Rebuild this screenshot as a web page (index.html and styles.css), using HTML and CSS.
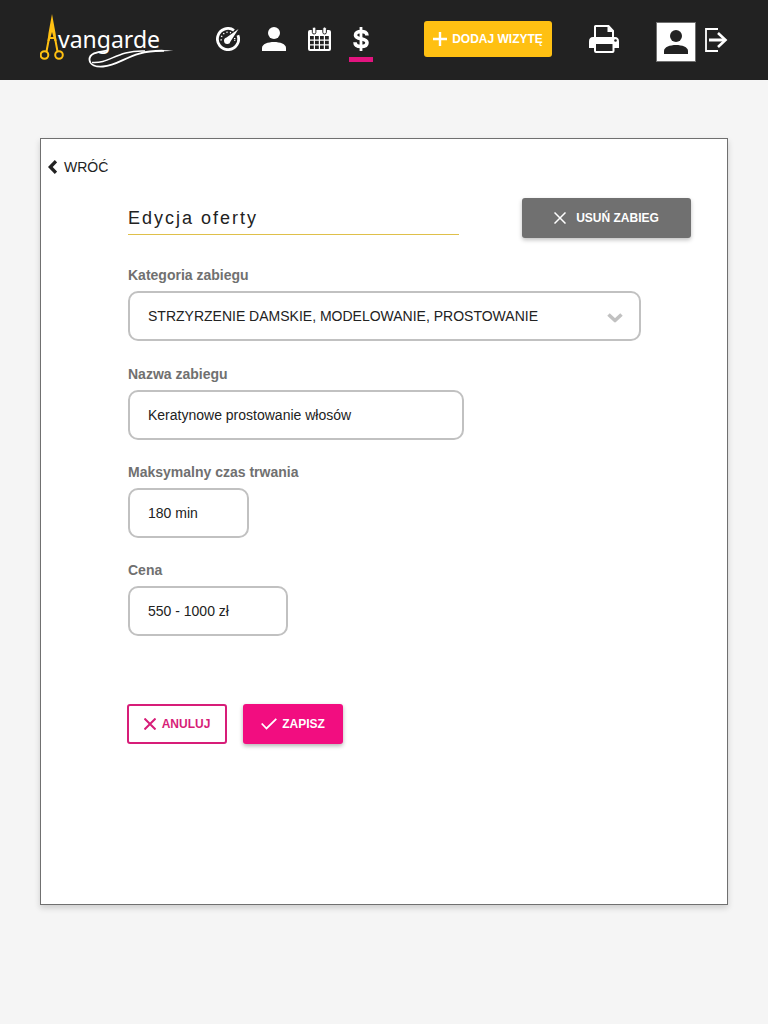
FILE: index.html
```html
<!DOCTYPE html>
<html lang="pl">
<head>
<meta charset="utf-8">
<meta name="viewport" content="width=device-width, initial-scale=1">
<title>Avangarde – Edycja oferty</title>
<link rel="stylesheet" href="styles.css">
</head>
<body>
<header class="topbar">
  <a class="logo" href="#" aria-label="Avangarde">
    <svg width="134" height="56" viewBox="0 0 134 56">
      <g fill="none" stroke="#ffc012" stroke-width="2">
        <circle cx="4.500" cy="43" r="3.800"/>
        <circle cx="19" cy="43" r="3.800"/>
        <path d="M6.500 39.500L9 26M17.500 39.500L15 26M8 26h8"/>
      </g>
      <path d="M12 2L15.500 21L16.500 29h-2L12 20L9.500 29H7.500L8.500 21Z" fill="#ffc012"/>
      <text class="logo-text" x="18" y="36">vangarde</text>
      <path d="M67 38.500C58 40 49 41 49.500 48C50 53 56 55 63 54.500C82 53 90 38 124 38.800" fill="none" stroke="#fff" stroke-width="1.800"/>
      <path d="M115 38.200Q125 37.600 133.500 39Q125 38.800 115 39.800Z" fill="#fff"/>
      <path d="M52 50.500C70 52 76 38 105 39" fill="none" stroke="#fff" stroke-width="1.500"/>
    </svg>
  </a>
  <nav class="nav">
    <a class="nav-item" href="#" aria-label="Pulpit">
      <svg width="24" height="24" viewBox="0 0 24 24">
        <path d="M18 3.300A10.600 10.600 0 1 0 21.900 8.200" fill="none" stroke="#fff" stroke-width="2.800"/>
        <path d="M22.500 2L14.500 14.500A3.300 3.300 0 1 1 10.500 10.500Z" fill="#fff"/>
        <path d="M5.300 13.500A6.900 6.900 0 0 1 15 5.800" fill="none" stroke="#fff" stroke-width="1.400" stroke-dasharray="1.300 2.200"/>
        <path d="M18.700 11v3" fill="none" stroke="#fff" stroke-width="1.400" stroke-dasharray="1.300 1"/>
      </svg>
    </a>
    <a class="nav-item" href="#" aria-label="Klienci">
      <svg width="24" height="24" viewBox="0 0 24 24" fill="#fff"><circle cx="12" cy="6" r="6"/><path d="M0 24V21C0 17 6 15 12 15S24 17 24 21V24Z"/></svg>
    </a>
    <a class="nav-item" href="#" aria-label="Kalendarz">
      <svg width="24" height="24" viewBox="0 0 24 24">
        <rect x="0" y="3" width="23" height="21" rx="2" fill="#fff"/>
        <path d="M2 9h3.800v3.500H2zM7 9h3.800v3.500H7zM12 9h3.800v3.500H12zM17 9h3.800v3.500H17zM2 13.700h3.800v3.500H2zM7 13.700h3.800v3.500H7zM12 13.700h3.800v3.500H12zM17 13.700h3.800v3.500H17zM2 18.500h3.800v3.500H2zM7 18.500h3.800v3.500H7zM12 18.500h3.800v3.500H12zM17 18.500h3.800v3.500H17z" fill="#222"/>
        <rect x="4.300" y="0" width="3.600" height="7" rx="1.700" fill="#fff" stroke="#222"/>
        <rect x="14.800" y="0" width="3.600" height="7" rx="1.700" fill="#fff" stroke="#222"/>
      </svg>
    </a>
    <a class="nav-item nav-item-active" href="#" aria-label="Cennik">
      <svg width="24" height="24" viewBox="0 0 24 24" fill="none" stroke="#fff"><path d="M18 8.500C18 5.500 15.500 4.500 12.300 4.500C8.500 4.500 6.500 6 6.500 8.200C6.500 13.200 18 10.500 18 15.800C18 18.300 15.500 19.500 12 19.500C8.500 19.500 6 18.500 6 15.200" stroke-width="3.600"/><path d="M12 0v24" stroke-width="2.800"/></svg>
    </a>
  </nav>
  <button class="btn btn-add" type="button">
    <svg width="14" height="14" viewBox="0 0 14 14" fill="none" stroke="#fff" stroke-width="2.400"><path d="M7 0v14M0 7h14"/></svg>
    DODAJ WIZYTĘ
  </button>
  <div class="tools">
    <a class="tool tool-print" href="#" aria-label="Drukuj">
      <svg width="30" height="28" viewBox="0 0 30 28">
        <path d="M0 16.500Q0 12 4 12H26Q30 12 30 16.500V23H0Z" fill="#fff"/>
        <path d="M6 13V1.500Q6 1 6.500 1H19.500L24 6V13Z" fill="#222" stroke="#fff" stroke-width="2"/>
        <path d="M18.500 1v6H24.500L18.500 1Z" fill="#fff"/>
        <path d="M6 13.500H24" stroke="#fff" stroke-width="2"/>
        <rect x="6" y="18" width="18.500" height="9" rx="1" fill="#222" stroke="#fff" stroke-width="2"/>
        <circle cx="26.500" cy="15.500" r="1.300" fill="#222"/>
      </svg>
    </a>
    <a class="avatar" href="#" aria-label="Profil">
      <svg width="24" height="24" viewBox="0 0 24 24" fill="#222"><circle cx="12" cy="6" r="6"/><path d="M0 24V21C0 17 6 15 12 15S24 17 24 21V24Z"/></svg>
    </a>
    <a class="tool" href="#" aria-label="Wyloguj">
      <svg width="23" height="26" viewBox="0 0 23 26" fill="none" stroke="#fff"><path d="M13 2H1V24H13" stroke-width="1.800"/><path d="M4 13H20" stroke-width="3"/><path d="M13 6L20.500 13L13 20" stroke-width="2.600"/></svg>
    </a>
  </div>
</header>

<main class="card">
  <a class="back" href="#">
    <svg width="9" height="14" viewBox="0 0 9 14" fill="none" stroke="#222" stroke-width="3.400"><path d="M8 1.200L2.300 7L8 12.800"/></svg>
    WRÓĆ
  </a>
  <form class="form">
    <div class="form-head">
      <h1 class="title">Edycja oferty</h1>
      <button class="btn btn-delete" type="button">
        <svg width="12" height="12" viewBox="0 0 12 12" fill="none" stroke="#fff" stroke-width="1.500"><path d="M.5 .5l11 11M11.500 .5l-11 11"/></svg>
        USUŃ ZABIEG
      </button>
    </div>
    <div class="field">
      <label class="label" for="category">Kategoria zabiegu</label>
      <div class="select-wrap">
        <select class="control" id="category"><option>STRZYRZENIE DAMSKIE, MODELOWANIE, PROSTOWANIE</option></select>
        <svg class="chevron" width="16" height="10" viewBox="0 0 16 10" fill="none" stroke="#c1c1c1" stroke-width="3.600" stroke-linejoin="round"><path d="M1.500 1.500L8 7.500L14.500 1.500"/></svg>
      </div>
    </div>
    <div class="field field-name">
      <label class="label" for="name">Nazwa zabiegu</label>
      <input class="control" id="name" type="text" value="Keratynowe prostowanie włosów">
    </div>
    <div class="field field-time">
      <label class="label" for="time">Maksymalny czas trwania</label>
      <input class="control" id="time" type="text" value="180 min">
    </div>
    <div class="field field-price">
      <label class="label" for="price">Cena</label>
      <input class="control" id="price" type="text" value="550 - 1000 zł">
    </div>
    <div class="actions">
      <button class="btn btn-cancel" type="button">
        <svg width="12" height="12" viewBox="0 0 12 12" fill="none" stroke="#d71d78" stroke-width="2"><path d="M.5 .5l11 11M11.500 .5l-11 11"/></svg>
        ANULUJ
      </button>
      <button class="btn btn-save" type="submit">
        <svg width="16" height="12" viewBox="0 0 16 12" fill="none" stroke="#fff" stroke-width="1.800"><path d="M.7 5.500L5.500 10.500L15.300 .8"/></svg>
        ZAPISZ
      </button>
    </div>
  </form>
</main>
</body>
</html>
```
FILE: styles.css
```css
* { box-sizing: border-box; }

body {
  min-height: 100vh;
  margin: 0;
  padding-bottom: 58px;
  background: #f5f5f5;
  color: #222;
  font-family: "Liberation Sans", Arial, sans-serif;
  font-size: 14px;
}

svg { display: block; flex: none; }
a { color: inherit; text-decoration: none; }

.topbar {
  display: flex;
  align-items: center;
  height: 80px;
  padding: 0 40px;
  background: #222;
}

.logo { margin-right: 42px; }
.logo-text {
  fill: #fff;
  font-family: "Noto Sans", sans-serif;
  font-size: 23px;
}

.nav { display: flex; gap: 22px; padding-top: 3px; }
.nav-item { padding: 5px 0 6px; border-bottom: 5px solid transparent; }
.nav-item-active { margin-left: -5px; border-color: #e2147f; }

.btn {
  display: flex;
  align-items: center;
  justify-content: center;
  height: 40px;
  padding: 0;
  border: 0;
  border-radius: 3px;
  color: #fff;
  font: bold 12px "Liberation Sans", Arial, sans-serif;
  white-space: nowrap;
  cursor: pointer;
}

.btn-add {
  gap: 5px;
  width: 128px;
  height: 36px;
  margin: 0 0 2px 51px;
  background: #ffc012;
}

.tools {
  display: flex;
  align-items: center;
  gap: 9px;
  margin-left: auto;
  padding-top: 4px;
}
.tool-print { margin: 0 28px 6px 0; }
.avatar {
  display: flex;
  align-items: center;
  justify-content: center;
  width: 40px;
  height: 40px;
  border: 1px solid #707070;
  background: #fff;
}
.tools .tool:last-child { margin-bottom: 4px; }

.card {
  min-height: 767px;
  margin: 58px 40px 0;
  padding: 20px 36px 40px 7px;
  border: 1px solid #707070;
  background: #fff;
  box-shadow: 0 3px 6px rgba(0, 0, 0, 0.16);
}

.back {
  display: inline-flex;
  align-items: center;
  gap: 7px;
  line-height: 16px;
}

.form { margin: 21px 0 0 80px; }

.form-head {
  display: flex;
  align-items: flex-start;
  justify-content: space-between;
  gap: 63px;
}
.title {
  flex: 1;
  margin: 0;
  padding: 10px 0 5px;
  border-bottom: 1px solid #dfc04a;
  font-size: 18px;
  font-weight: normal;
  line-height: 21px;
  letter-spacing: 2px;
}
.btn-delete {
  gap: 10px;
  width: 169px;
  background: #707070;
  box-shadow: 0 2px 4px rgba(0, 0, 0, 0.25);
}

.field { margin-top: 24px; margin-right: 50px; }
.form-head + .field { margin: 29px 50px 25px 0; }
.label {
  display: block;
  margin-bottom: 8px;
  color: #707070;
  font-weight: bold;
  line-height: 16px;
}
.control {
  display: block;
  width: 100%;
  height: 50px;
  padding: 0 18px;
  border: 2px solid #c1c1c1;
  border-radius: 10px;
  appearance: none;
  background: #fff;
  color: #222;
  font: 14px "Liberation Sans", Arial, sans-serif;
}
.field-name .control { max-width: 336px; }
.field-time .control { max-width: 121px; }
.field-price .control { max-width: 160px; }

.select-wrap { position: relative; }
.chevron {
  position: absolute;
  top: 22px;
  right: 18px;
  pointer-events: none;
}

.actions { display: flex; gap: 16px; margin: 68px 0 0 -1px; }
.btn-cancel {
  gap: 6px;
  width: 100px;
  border: 2px solid #d71d78;
  background: #fff;
  color: #d71d78;
}
.btn-save {
  gap: 5px;
  width: 100px;
  background: #f20d80;
  box-shadow: 0 2px 4px rgba(0, 0, 0, 0.3);
}
```
